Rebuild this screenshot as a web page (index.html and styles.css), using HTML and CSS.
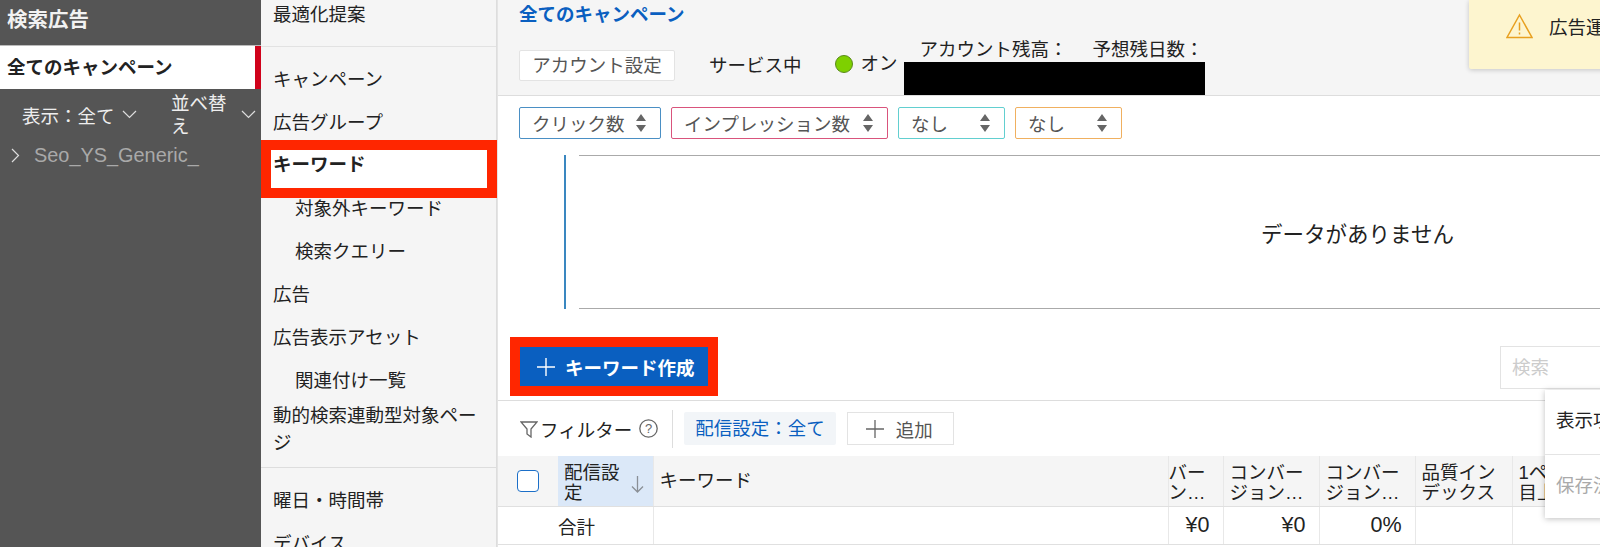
FILE: index.html
```html
<!DOCTYPE html>
<html lang="ja">
<head>
    <meta charset="UTF-8">
    <title>キーワード</title>
    <link rel="stylesheet" href="styles.css">
</head>
<body>
<div class="app">
    <div class="sidebar">
        <div class="side-title">検索広告</div>
        <div class="side-all">全てのキャンペーン</div>
        <div class="side-filters">
            <div class="side-show">表示：全て
                <svg width="15" height="9" viewBox="0 0 15 9"><path d="M1 1l6.5 6.5L14 1" class="line"/></svg>
            </div>
            <div class="side-sort">並べ替え</div>
            <svg class="sort-chev" width="15" height="9" viewBox="0 0 15 9"><path d="M1 1l6.5 6.5L14 1" class="line"/></svg>
        </div>
        <div class="side-tree">
            <svg width="9" height="15" viewBox="0 0 9 15"><path d="M1 1l6.5 6.5L1 14" class="line"/></svg>
            <span>Seo_YS_Generic_</span>
        </div>
    </div>

    <div class="nav">
        <div class="nav-top">最適化提案</div>
        <div class="nav-group">
            <div class="nav-item">キャンペーン</div>
            <div class="nav-item">広告グループ</div>
            <div class="nav-active">キーワード</div>
            <div class="nav-item sub">対象外キーワード</div>
            <div class="nav-item sub">検索クエリー</div>
            <div class="nav-item">広告</div>
            <div class="nav-item">広告表示アセット</div>
            <div class="nav-item sub">関連付け一覧</div>
            <div class="nav-wrap">動的検索連動型対象ページ</div>
        </div>
        <div class="nav-group">
            <div class="nav-item">曜日・時間帯</div>
            <div class="nav-item">デバイス</div>
        </div>
    </div>

    <div class="main">
        <div class="head">
            <div class="head-title">全てのキャンペーン</div>
            <div class="head-row">
                <div class="acct-btn">アカウント設定</div>
                <div class="service">サービス中</div>
                <div class="dot"></div>
                <div class="on">オン</div>
                <div class="balance">
                    <div class="balance-labels"><span>アカウント残高：</span><span>予想残日数：</span></div>
                    <div class="blackout"></div>
                </div>
            </div>
        </div>

        <div class="metrics">
            <div class="metric m-blue">クリック数<svg class="updown" width="12" height="20" viewBox="0 0 12 20"><path d="M6 1l5 7H1zM6 19l5-7H1z"/></svg></div>
            <div class="metric m-pink">インプレッション数<svg class="updown" width="12" height="20" viewBox="0 0 12 20"><path d="M6 1l5 7H1zM6 19l5-7H1z"/></svg></div>
            <div class="metric m-teal">なし<svg class="updown" width="12" height="20" viewBox="0 0 12 20"><path d="M6 1l5 7H1zM6 19l5-7H1z"/></svg></div>
            <div class="metric m-orange">なし<svg class="updown" width="12" height="20" viewBox="0 0 12 20"><path d="M6 1l5 7H1zM6 19l5-7H1z"/></svg></div>
        </div>

        <div class="chart">
            <div class="chart-axis"></div>
            <div class="chart-area">データがありません</div>
        </div>

        <div class="actions">
            <div class="create-box">
                <div class="create-btn">
                    <svg width="18" height="18" viewBox="0 0 18 18"><path d="M9 0v18M0 9h18" class="line-white"/></svg>
                    キーワード作成
                </div>
            </div>
            <div class="search">検索</div>
        </div>

        <div class="filters">
            <svg class="funnel" width="18" height="18" viewBox="0 0 18 18"><path d="M1 2h16l-6 7v8l-4-3V9z" class="line-dark"/></svg>
            <span class="filter-label">フィルター</span>
            <svg class="help" width="19" height="19" viewBox="0 0 19 19"><circle cx="9.5" cy="9.5" r="8.7" class="line-dark"/><text x="9.5" y="14" text-anchor="middle" class="help-q">?</text></svg>
            <div class="filter-sep"></div>
            <div class="chip">配信設定：全て</div>
            <div class="add-btn">
                <svg width="18" height="18" viewBox="0 0 18 18"><path d="M9 0v18M0 9h18" class="line-dark"/></svg>
                追加
            </div>
        </div>

        <table class="grid">
            <colgroup>
                <col class="c-check"><col class="c-status"><col class="c-key"><col class="c-a"><col class="c-b"><col class="c-b"><col class="c-c"><col class="c-c">
            </colgroup>
            <thead>
                <tr>
                    <th class="th-check"><div class="checkbox"></div></th>
                    <th class="th-sorted">
                        <div class="th-sort">
                            <span>配信設定</span>
                            <svg width="13" height="17" viewBox="0 0 13 17"><path d="M6.5 0v16M1 10.5L6.5 16 12 10.5" class="line-grey"/></svg>
                        </div>
                    </th>
                    <th class="th-key">キーワード</th>
                    <th class="tight">バーン…</th>
                    <th>コンバージョン…</th>
                    <th>コンバージョン…</th>
                    <th>品質インデックス</th>
                    <th>1ページ<br>目上…</th>
                </tr>
            </thead>
            <tbody>
                <tr>
                    <td></td>
                    <td class="total">合計</td>
                    <td></td>
                    <td class="num">¥0</td>
                    <td class="num">¥0</td>
                    <td class="num">0%</td>
                    <td></td>
                    <td></td>
                </tr>
            </tbody>
        </table>

        <div class="toast">
            <svg width="27" height="26" viewBox="0 0 27 26"><path d="M13.5 2L26 24.5H1z" class="warn"/><path d="M13.5 9.5v8M13.5 19.5v2" class="warn"/></svg>
            <span>広告運用</span>
        </div>

        <div class="menu">
            <div class="menu-item">表示項目</div>
            <div class="menu-item off">保存済み</div>
        </div>
    </div>
</div>
</body>
</html>
```

FILE: styles.css
```css
html, body {
    margin: 0;
    padding: 0;
    height: 547px;
    overflow: hidden;
    background: #fff;
}
body {
    font-family: "Liberation Sans", "Noto Sans CJK JP", sans-serif;
    font-size: 18.5px;
    color: #222;
}
.app {
    display: flex;
    width: 1600px;
    height: 547px;
    overflow: hidden;
}
.line { fill: none; stroke: #ddd; stroke-width: 1.2; }
.line-white { fill: none; stroke: #fff; stroke-width: 1.4; }
.line-dark { fill: none; stroke: #666; stroke-width: 1.3; }
.line-grey { fill: none; stroke: #8a8f96; stroke-width: 1.3; }

/* dark left column */
.sidebar {
    width: 261px;
    flex: none;
    background: #555;
    color: #fff;
}
.side-title {
    height: 45px;
    line-height: 40px;
    padding-left: 7px;
    font-size: 20.5px;
    font-weight: bold;
    border-bottom: 1px solid #bbb;
    color: #f2f2f2;
}
.side-all {
    height: 43px;
    line-height: 43px;
    padding-left: 7px;
    font-weight: bold;
    background: #fff;
    color: #222;
    border-right: 6px solid #d0021b;
}
.side-filters {
    display: flex;
    align-items: center;
    height: 51px;
    padding-left: 22px;
    color: #eee;
}
.side-show {
    width: 149px;
    flex: none;
    display: flex;
    align-items: center;
    gap: 7px;
}
.side-sort {
    width: 60px;
    flex: none;
    line-height: 23px;
}
.sort-chev {
    margin-left: 10px;
}
.side-tree {
    display: flex;
    align-items: center;
    gap: 14px;
    padding: 4px 0 0 11px;
    color: #a9a9a9;
    font-size: 19.9px;
}

/* second column */
.nav {
    width: 235px;
    flex: none;
    background: #f5f5f5;
    border-right: 1px solid #ddd;
}
.nav-top {
    height: 46px;
    line-height: 30px;
    padding-left: 12px;
    border-bottom: 1px solid #e2e2e2;
}
.nav-group {
    padding-top: 11px;
}
.nav-item {
    height: 43px;
    line-height: 43px;
    padding-left: 12px;
}
.nav-item.sub {
    padding-left: 34px;
}
.nav-active {
    height: 38px;
    line-height: 30px;
    margin: -4px -1px -11px 0;
    padding-left: 2px;
    background: #fff;
    border: 10px solid #ff2600;
    font-weight: bold;
    position: relative;
}
.nav-wrap {
    height: 65px;
    padding: 0 10px 0 12px;
    line-height: 27px;
    border-bottom: 1px solid #ddd;
}

/* main column */
.main {
    flex: 1;
    min-width: 0;
    position: relative;
    border-left: 1px solid #e4e4e4;
}
.head {
    height: 95px;
    background: #f5f5f5;
    border-bottom: 1px solid #ddd;
    padding-left: 21px;
}
.head-title {
    height: 50px;
    line-height: 29px;
    font-weight: bold;
    color: #0a5fc0;
}
.head-row {
    display: flex;
    align-items: flex-start;
}
.acct-btn {
    width: 154px;
    height: 29px;
    line-height: 29px;
    text-align: center;
    background: #fff;
    border: 1px solid #e3e3e3;
    border-radius: 2px;
    color: #555;
}
.service {
    margin-left: 34px;
    line-height: 31px;
}
.dot {
    width: 16px;
    height: 16px;
    margin: 5px 0 0 33px;
    background: #7ed000;
    border: 1px solid #5a8a1a;
    border-radius: 50%;
}
.on {
    margin-left: 8px;
    line-height: 27px;
}
.balance {
    margin: -13px 0 0 6px;
}
.balance-labels {
    display: flex;
    height: 25px;
    line-height: 25px;
    padding-left: 16px;
    gap: 25px;
}
.blackout {
    width: 301px;
    height: 33px;
    background: #000;
}

.metrics {
    display: flex;
    gap: 10px;
    padding: 11px 0 0 21px;
    height: 32px;
}
.metric {
    display: flex;
    align-items: center;
    justify-content: space-between;
    box-sizing: border-box;
    height: 32px;
    padding: 0 13px 0 12px;
    border: 1.5px solid #888;
    border-radius: 2px;
    color: #555;
}
.updown { fill: #666; }
.m-blue { width: 142px; border-color: #4a8fc4; }
.m-pink { width: 217px; border-color: #d9547c; }
.m-teal { width: 107px; border-color: #62cfd0; }
.m-orange { width: 107px; border-color: #f0b060; }

/* the chart runs on past the right edge of the window */
.chart {
    display: flex;
    margin: 16px 0 0 66px;
    height: 154px;
}
.chart-axis {
    flex: none;
    width: 1.5px;
    background: #3a87c0;
    margin-right: 13px;
}
.chart-area {
    flex: none;
    width: 1558px;
    display: flex;
    align-items: center;
    justify-content: center;
    border-top: 1px solid #aaa;
    border-bottom: 1px solid #aaa;
    font-size: 21.5px;
}

.actions {
    display: flex;
    justify-content: space-between;
    height: 63px;
    padding: 28px 0 0 12px;
    border-bottom: 1px solid #ddd;
}
.create-box {
    border: 10px solid #ff2600;
    height: 39px;
}
.create-btn {
    display: flex;
    align-items: center;
    gap: 10px;
    box-sizing: border-box;
    width: 188px;
    height: 39px;
    padding-left: 17px;
    background: #0a5fc0;
    color: #fff;
    font-weight: bold;
}
.search {
    width: 88px;
    height: 41px;
    margin-top: 9px;
    line-height: 41px;
    padding-left: 11px;
    border: 1px solid #e3e3e3;
    border-right: 0;
    color: #ccc;
}

.filters {
    display: flex;
    align-items: center;
    height: 55px;
    padding-left: 22px;
}
.funnel { flex: none; }
.filter-label { margin-left: 2px; }
.help { margin-left: 7px; flex: none; }
.help-q { font-size: 13px; fill: #666; }
.filter-sep {
    width: 1px;
    height: 38px;
    margin: 0 11px 0 14px;
    background: #ddd;
}
.chip {
    height: 33px;
    line-height: 33px;
    padding: 0 11px;
    background: #f2f5f8;
    border-radius: 2px;
    color: #0a5fc0;
}
.add-btn {
    display: flex;
    align-items: center;
    gap: 12px;
    box-sizing: border-box;
    width: 107px;
    height: 33px;
    margin-left: 11px;
    padding-left: 18px;
    border: 1px solid #e3e3e3;
    color: #555;
}

.grid {
    table-layout: fixed;
    width: 1102px;
    border-collapse: collapse;
}
.c-check { width: 60px; }
.c-status { width: 95px; }
.c-key { width: 515px; }
.c-a { width: 55px; }
.c-b { width: 96px; }
.c-c { width: 97px; }
.grid th {
    height: 47px;
    padding: 3px 6px 0;
    background: #f5f5f5;
    border-left: 1px solid #e8e8e8;
    border-bottom: 1px solid #e0e0e0;
    font-weight: normal;
    text-align: left;
    line-height: 20px;
    overflow: hidden;
}
.grid th.th-key { padding-top: 0; }
.grid th.tight { padding-left: 0; padding-right: 0; }
.grid th.th-check {
    border-left: 0;
    padding: 0 0 0 19px;
}
.grid th.th-sorted {
    background: #dbe8f8;
    border-left: 0;
}
.th-sort {
    display: flex;
    align-items: center;
    justify-content: space-between;
}
.th-sort span { width: 60px; }
.th-sort svg { flex: none; margin: 4px 3px 0 0; }
.checkbox {
    width: 20px;
    height: 20px;
    border: 1.5px solid #1c6fc8;
    border-radius: 4px;
    background: #fff;
}
.grid td {
    height: 37px;
    padding: 0 13px 0 0;
    border-left: 1px solid #e8e8e8;
    border-bottom: 1px solid #e0e0e0;
}
.grid td:first-child { border-left: 0; }
.grid td.total { border-left: 0; }
.grid td.num {
    text-align: right;
    font-size: 21.5px;
}

/* floating bits */
.toast {
    position: absolute;
    top: 0;
    left: 971px;
    box-sizing: border-box;
    width: 140px;
    height: 69px;
    display: flex;
    align-items: center;
    gap: 16px;
    padding: 0 0 17px 37px;
    background: #fdf5cf;
    box-shadow: 0 1px 5px rgba(0, 0, 0, 0.2);
    border-radius: 0 0 0 2px;
    overflow: hidden;
    white-space: nowrap;
}
.toast svg { flex: none; }
.warn { fill: none; stroke: #e8a020; stroke-width: 1.5; }
.menu {
    position: absolute;
    top: 390px;
    left: 1047px;
    width: 60px;
    height: 128px;
    background: #fff;
    box-shadow: 0 1px 6px rgba(0, 0, 0, 0.25);
    overflow: hidden;
    white-space: nowrap;
}
.menu-item {
    height: 64px;
    line-height: 62px;
    padding-left: 11px;
    border-bottom: 1px solid #e4e4e4;
}
.menu-item.off {
    color: #aaa;
    border-bottom: 0;
}
```
